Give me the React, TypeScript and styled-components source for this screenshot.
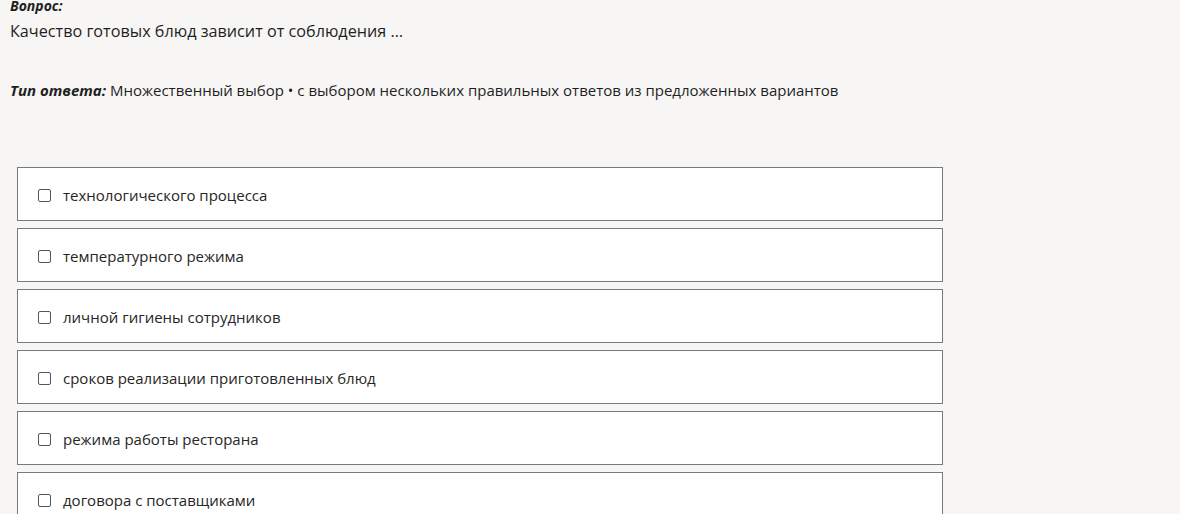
import React from "react";
import styled, { createGlobalStyle } from "styled-components";

const Global = createGlobalStyle`
  html, body { margin: 0; padding: 0; background: #f7f6f4; }
  body { font-family: "Open Sans", "Noto Sans", sans-serif; color: #1f1f1f; }
`;

const Page = styled.div`
  padding: 0 0 0 10px;
  margin-top: -4px;
`;

const Label = styled.div`
  font-weight: 700;
  font-style: italic;
  font-size: 14px;
  line-height: 20px;
`;

const Question = styled.div`
  font-size: 16.2px;
  line-height: 22px;
  margin-top: 4px;
`;

const TypeLine = styled.div`
  font-size: 15px;
  line-height: 20px;
  margin-top: 38px;
  & b { font-weight: 700; font-style: italic; }
`;

const Options = styled.div`
  display: flex;
  flex-direction: column;
  gap: 7px;
  margin: 67px 0 0 7px;
  width: 926px;
`;

const Option = styled.label`
  display: flex;
  align-items: center;
  gap: 12px;
  height: 54px;
  box-sizing: border-box;
  padding: 2px 0 0 20px;
  background: #fff;
  border: 1px solid #7a7a7a;
  font-size: 15px;
  color: #262626;
`;

const Box = styled.span`
  width: 11px;
  height: 11px;
  border: 1px solid #555;
  border-radius: 2px;
  background: #fff;
  flex: none;
`;

const options = [
  "технологического процесса",
  "температурного режима",
  "личной гигиены сотрудников",
  "сроков реализации приготовленных блюд",
  "режима работы ресторана",
  "договора с поставщиками",
];

export default function App() {
  return (
    <>
      <Global />
      <Page>
        <Label>Вопрос:</Label>
        <Question>Качество готовых блюд зависит от соблюдения …</Question>
        <TypeLine>
          <b>Тип ответа:</b> Множественный выбор • с выбором нескольких правильных ответов из предложенных вариантов
        </TypeLine>
        <Options>
          {options.map((o) => (
            <Option key={o}>
              <Box />
              {o}
            </Option>
          ))}
        </Options>
      </Page>
    </>
  );
}
